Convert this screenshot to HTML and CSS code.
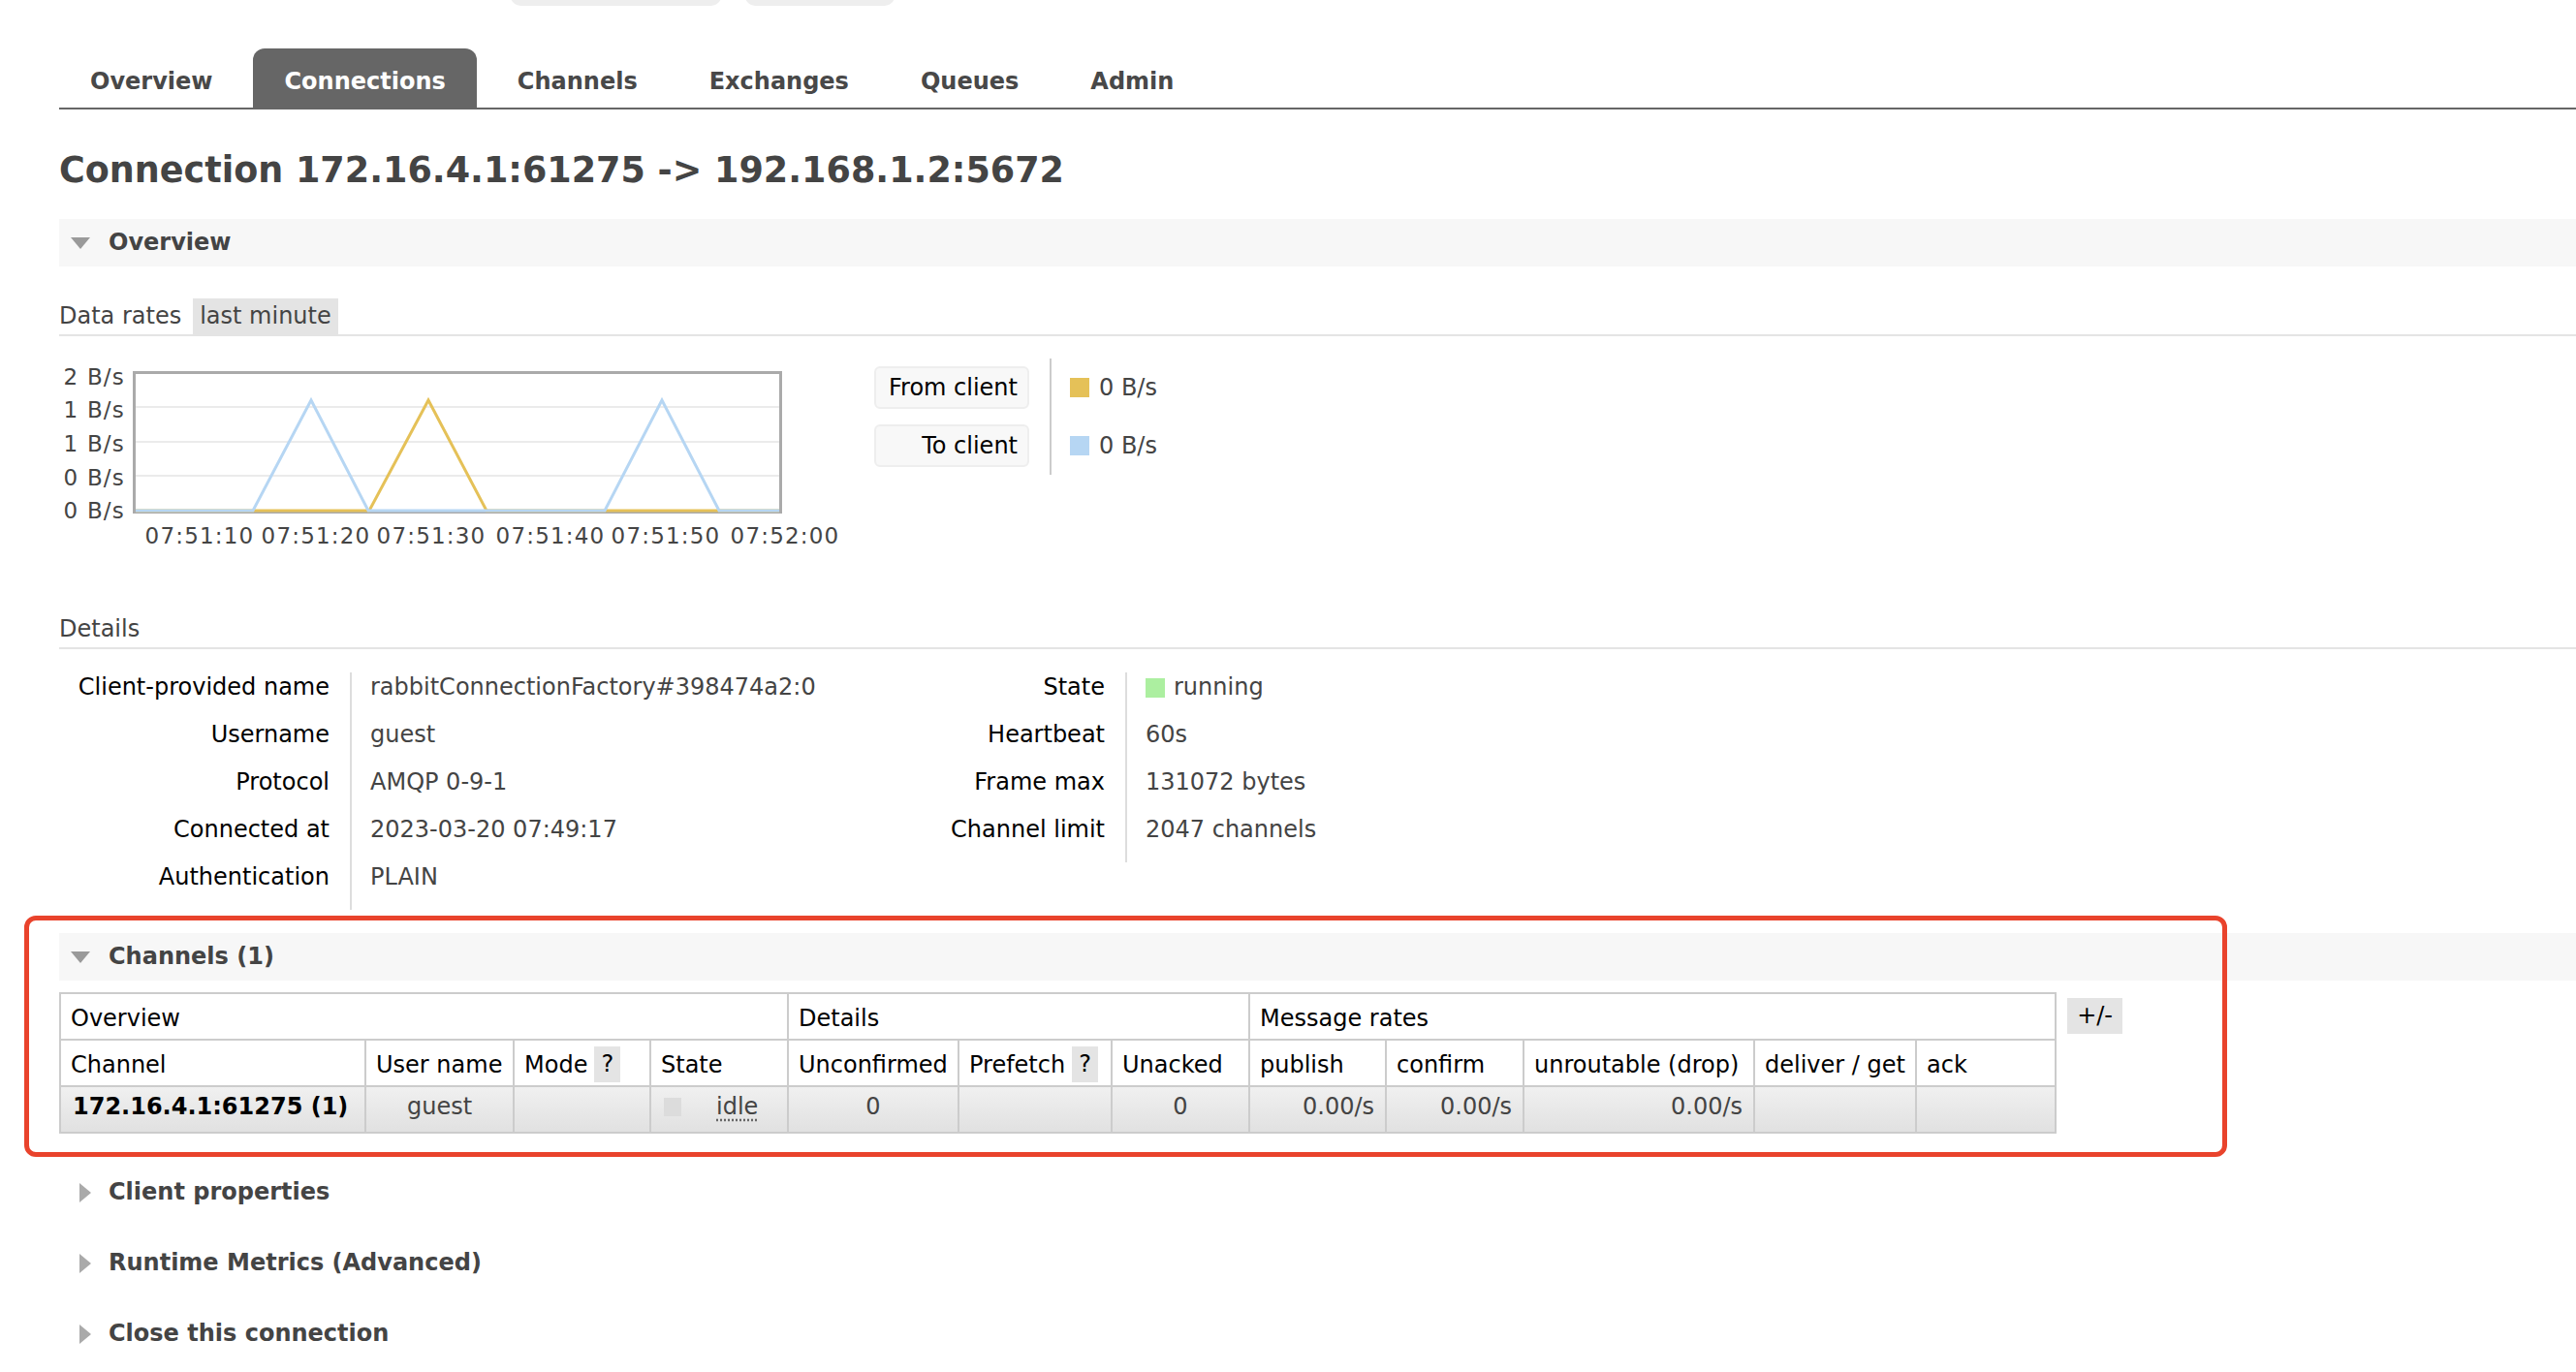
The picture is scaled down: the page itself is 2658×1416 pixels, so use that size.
FILE: index.html
```html
<!DOCTYPE html>
<html lang="en">
<head>
<meta charset="utf-8">
<title>Connection 172.16.4.1:61275 -&gt; 192.168.1.2:5672</title>
<link rel="stylesheet" href="styles.css">
</head>
<body>
<div class="topbar"><span class="stub stub-a"></span><span class="stub stub-b"></span></div>
<div class="page">
  <ul class="tabs">
    <li class="tab">Overview</li>
    <li class="tab active">Connections</li>
    <li class="tab">Channels</li>
    <li class="tab">Exchanges</li>
    <li class="tab">Queues</li>
    <li class="tab">Admin</li>
  </ul>

  <h1 class="title">Connection 172.16.4.1:61275 -&gt; 192.168.1.2:5672</h1>

  <section class="section sec-overview">
    <h2 class="section-head open"><span class="tri-down"></span>Overview</h2>
    <h3 class="subhead rates-head"><span>Data rates</span><span class="pill">last minute</span></h3>
    <div class="rates">
      <svg class="chart" width="810" height="200" viewBox="0 0 810 200">
        <rect x="77.5" y="14.5" width="667" height="144" fill="#fff" stroke="#aaa" stroke-width="3"/>
        <g stroke="#ebebeb" stroke-width="2">
          <line x1="79" y1="50" x2="743" y2="50"/>
          <line x1="79" y1="86" x2="743" y2="86"/>
          <line x1="79" y1="121" x2="743" y2="121"/>
        </g>
        <polyline fill="none" stroke="#e5c158" stroke-width="3" stroke-linejoin="miter" points="79,157 320,157 381,43 441,157 743,157"/>
        <polyline fill="none" stroke="#b6d6f3" stroke-width="3" stroke-linejoin="miter" points="79,157 200,157 260,43 319,157 563,157 622,43 681,157 743,157"/>
        <g class="axis">
          <text x="68" y="27" text-anchor="end">2 B/s</text>
          <text x="68" y="61" text-anchor="end">1 B/s</text>
          <text x="68" y="96" text-anchor="end">1 B/s</text>
          <text x="68" y="131" text-anchor="end">0 B/s</text>
          <text x="68" y="165" text-anchor="end">0 B/s</text>
          <text x="145" y="191" text-anchor="middle">07:51:10</text>
          <text x="265" y="191" text-anchor="middle">07:51:20</text>
          <text x="384" y="191" text-anchor="middle">07:51:30</text>
          <text x="507" y="191" text-anchor="middle">07:51:40</text>
          <text x="626" y="191" text-anchor="middle">07:51:50</text>
          <text x="749" y="191" text-anchor="middle">07:52:00</text>
        </g>
      </svg>
      <div class="legend">
        <div class="legend-keys">
          <div class="legend-key">From client</div>
          <div class="legend-key">To client</div>
        </div>
        <div class="legend-vals">
          <div class="legend-val"><span class="swatch swatch-yellow"></span>0 B/s</div>
          <div class="legend-val"><span class="swatch swatch-blue"></span>0 B/s</div>
        </div>
      </div>
    </div>

    <h3 class="subhead details-head">Details</h3>
    <div class="facts-wrap">
      <table class="facts facts-left">
        <tr><th>Client-provided name</th><td>rabbitConnectionFactory#398474a2:0</td></tr>
        <tr><th>Username</th><td>guest</td></tr>
        <tr><th>Protocol</th><td>AMQP 0-9-1</td></tr>
        <tr><th>Connected at</th><td>2023-03-20 07:49:17</td></tr>
        <tr><th>Authentication</th><td>PLAIN</td></tr>
      </table>
      <table class="facts facts-right">
        <tr><th>State</th><td><span class="state-green"></span>running</td></tr>
        <tr><th>Heartbeat</th><td>60s</td></tr>
        <tr><th>Frame max</th><td>131072 bytes</td></tr>
        <tr><th>Channel limit</th><td>2047 channels</td></tr>
      </table>
    </div>
  </section>

  <div class="highlight">
    <section class="section sec-channels">
      <h2 class="section-head open"><span class="tri-down"></span>Channels (1)</h2>
      <div class="chan-body">
        <table class="chan">
          <colgroup>
            <col class="c-channel"><col class="c-user"><col class="c-mode"><col class="c-state">
            <col class="c-unconf"><col class="c-prefetch"><col class="c-unacked">
            <col class="c-publish"><col class="c-confirm"><col class="c-unroute"><col class="c-deliver"><col class="c-ack">
          </colgroup>
          <thead>
            <tr><th colspan="4">Overview</th><th colspan="3">Details</th><th colspan="5">Message rates</th></tr>
            <tr>
              <th>Channel</th><th>User name</th><th>Mode<span class="help">?</span></th><th>State</th>
              <th>Unconfirmed</th><th>Prefetch<span class="help">?</span></th><th>Unacked</th>
              <th>publish</th><th>confirm</th><th>unroutable (drop)</th><th>deliver / get</th><th>ack</th>
            </tr>
          </thead>
          <tbody>
            <tr>
              <td class="strong">172.16.4.1:61275 (1)</td>
              <td class="ctr">guest</td>
              <td></td>
              <td class="state-cell"><span class="state-grey"></span><abbr class="idle">idle</abbr></td>
              <td class="ctr">0</td>
              <td></td>
              <td class="ctr">0</td>
              <td class="num">0.00/s</td>
              <td class="num">0.00/s</td>
              <td class="num">0.00/s</td>
              <td></td>
              <td></td>
            </tr>
          </tbody>
        </table>
        <span class="plusminus">+/-</span>
      </div>
    </section>
    <div class="annot"></div>
  </div>

  <section class="section collapsed first-collapsed">
    <h2 class="section-head"><span class="tri-right"></span>Client properties</h2>
  </section>
  <section class="section collapsed">
    <h2 class="section-head"><span class="tri-right"></span>Runtime Metrics (Advanced)</h2>
  </section>
  <section class="section collapsed">
    <h2 class="section-head"><span class="tri-right"></span>Close this connection</h2>
  </section>
</div>
</body>
</html>
```

FILE: styles.css
```css
* { box-sizing: border-box; }
html, body { margin: 0; padding: 0; background: #fff; }
body {
  font-family: "DejaVu Sans", Verdana, sans-serif;
  font-size: 24px;
  color: #444;
  width: 2658px;
  min-height: 1416px;
}

.topbar { height: 6px; overflow: hidden; display: flex; }
.stub { display: block; height: 30px; margin-top: -24px; background: #eee; border-radius: 0 0 10px 10px; }
.stub-a { margin-left: 527px; width: 217px; }
.stub-b { margin-left: 25px; width: 154px; }

.page { padding-left: 61px; }

.tabs {
  list-style: none;
  margin: 44px 0 0;
  padding: 0;
  display: flex;
  border-bottom: 2px solid #666;
}
.tab {
  height: 61px;
  padding: 7px 32px 0;
  line-height: 54px;
  font-weight: bold;
  color: #484848;
  margin-right: 10px;
  border-radius: 12px 12px 0 0;
}
.tab.active { background: #666; color: #fff; }

.title {
  margin: 40px 0 0;
  font-size: 36.5px;
  line-height: 46px;
  font-weight: bold;
  color: #444;
}

.section-head {
  margin: 0;
  height: 49px;
  line-height: 49px;
  font-size: 24px;
  font-weight: bold;
  color: #444;
  display: flex;
  align-items: center;
  padding-left: 12px;
}
.section-head.open { background: #f7f7f7; }
.tri-down {
  width: 0; height: 0;
  border-left: 10px solid transparent;
  border-right: 10px solid transparent;
  border-top: 12px solid #9a9a9a;
  margin-right: 19px;
}
.tri-right {
  width: 0; height: 0;
  border-top: 10px solid transparent;
  border-bottom: 10px solid transparent;
  border-left: 12px solid #aaa;
  margin-left: 9px;
  margin-right: 18px;
}

.sec-overview { margin-top: 27px; }

.subhead {
  margin: 0;
  display: flex;
  font-size: 24px;
  font-weight: normal;
  color: #444;
  border-bottom: 2px solid #e4e4e4;
}
.rates-head { margin-top: 33px; line-height: 37px; }
.pill { background: #e4e4e4; padding: 0 7px; margin-left: 12px; }
.details-head { margin-top: 64px; line-height: 30px; padding-bottom: 4px; }

.rates { display: flex; align-items: flex-start; margin-top: 23px; }
.chart { display: block; }
.axis text {
  font-family: "DejaVu Sans", Verdana, sans-serif;
  font-size: 23px;
  letter-spacing: 1.2px;
  fill: #444;
}

.legend { display: flex; margin-left: 31px; }
.legend-keys { display: flex; flex-direction: column; gap: 16px; padding: 8px 21px 8px 0; }
.legend-key {
  width: 160px;
  height: 44px;
  line-height: 40px;
  text-align: right;
  padding-right: 10px;
  background: #f8f8f8;
  border: 2px solid #eee;
  border-radius: 6px;
  color: #000;
}
.legend-vals {
  display: flex;
  flex-direction: column;
  gap: 16px;
  padding: 8px 0 8px 19px;
  border-left: 2px solid #ccc;
}
.legend-val { height: 44px; display: flex; align-items: center; color: #444; }
.swatch { width: 20px; height: 20px; margin-right: 10px; }
.swatch-yellow { background: #e5c158; }
.swatch-blue { background: #b6d6f3; }

.facts-wrap { display: flex; align-items: flex-start; margin-top: 24px; }
.facts { border-collapse: collapse; border-spacing: 0; }
.facts th {
  font-weight: normal;
  color: #000;
  text-align: right;
  vertical-align: top;
  padding: 0 21px 19px 0;
  line-height: 30px;
  white-space: nowrap;
}
.facts td {
  vertical-align: top;
  padding: 0 0 19px 19px;
  line-height: 30px;
  border-left: 2px solid #ddd;
  color: #444;
  white-space: nowrap;
}
.facts-left th { width: 301px; }
.facts-left td { width: 578px; }
.facts-right th { width: 222px; }
.state-green {
  display: inline-block;
  width: 20px;
  height: 20px;
  background: #acefa0;
  margin-right: 9px;
  vertical-align: -3px;
}

.highlight { position: relative; margin-top: 24px; }
.annot {
  position: absolute;
  top: -18px;
  left: -36px;
  width: 2273px;
  height: 249px;
  border: 5px solid #e9432c;
  border-radius: 12px;
  pointer-events: none;
}

.chan-body { display: flex; align-items: flex-start; margin-top: 12px; }
.chan {
  border-collapse: collapse;
  table-layout: fixed;
  width: 2059px;
  border: 2px solid #ccc;
}
.c-channel { width: 315px; }
.c-user { width: 153px; }
.c-mode { width: 141px; }
.c-state { width: 142px; }
.c-unconf { width: 176px; }
.c-prefetch { width: 158px; }
.c-unacked { width: 142px; }
.c-publish { width: 141px; }
.c-confirm { width: 142px; }
.c-unroute { width: 238px; }
.c-deliver { width: 167px; }
.c-ack { width: 144px; }

.chan th, .chan td {
  border: 2px solid #ccc;
  padding: 10px 10px 6px;
  line-height: 30px;
  text-align: left;
  font-weight: normal;
  color: #000;
  white-space: nowrap;
  overflow: hidden;
}
.chan thead th { background: #fff; }
.chan tbody td {
  padding-top: 5px;
  padding-bottom: 11px;
  background: linear-gradient(#f0f0f0, #e1e1e1);
  color: #444;
}
.chan tbody td.strong { font-weight: bold; color: #000; padding-left: 12px; }
.chan tbody td.ctr { text-align: center; }
.chan tbody td.num { text-align: right; padding-right: 11px; }
.chan tbody td.state-cell { padding-left: 13px; }
.help {
  display: inline-block;
  height: 37px;
  line-height: 37px;
  margin: -4px 0 -3px 7px;
  padding: 0 7px;
  background: #e4e4e4;
  color: #000;
  vertical-align: top;
}
.state-grey {
  display: inline-block;
  width: 18px;
  height: 19px;
  background: #dcdcdc;
  margin-right: 36px;
  vertical-align: -2px;
}
.idle {
  text-decoration: underline dotted #666;
  text-underline-offset: 5px;
  color: #444;
}
.plusminus {
  margin: 6px 0 0 11px;
  width: 57px;
  height: 37px;
  line-height: 37px;
  text-align: center;
  background: #e4e4e4;
  color: #000;
}

.collapsed { margin-top: 24px; }
.first-collapsed { margin-top: 36px; }
```
